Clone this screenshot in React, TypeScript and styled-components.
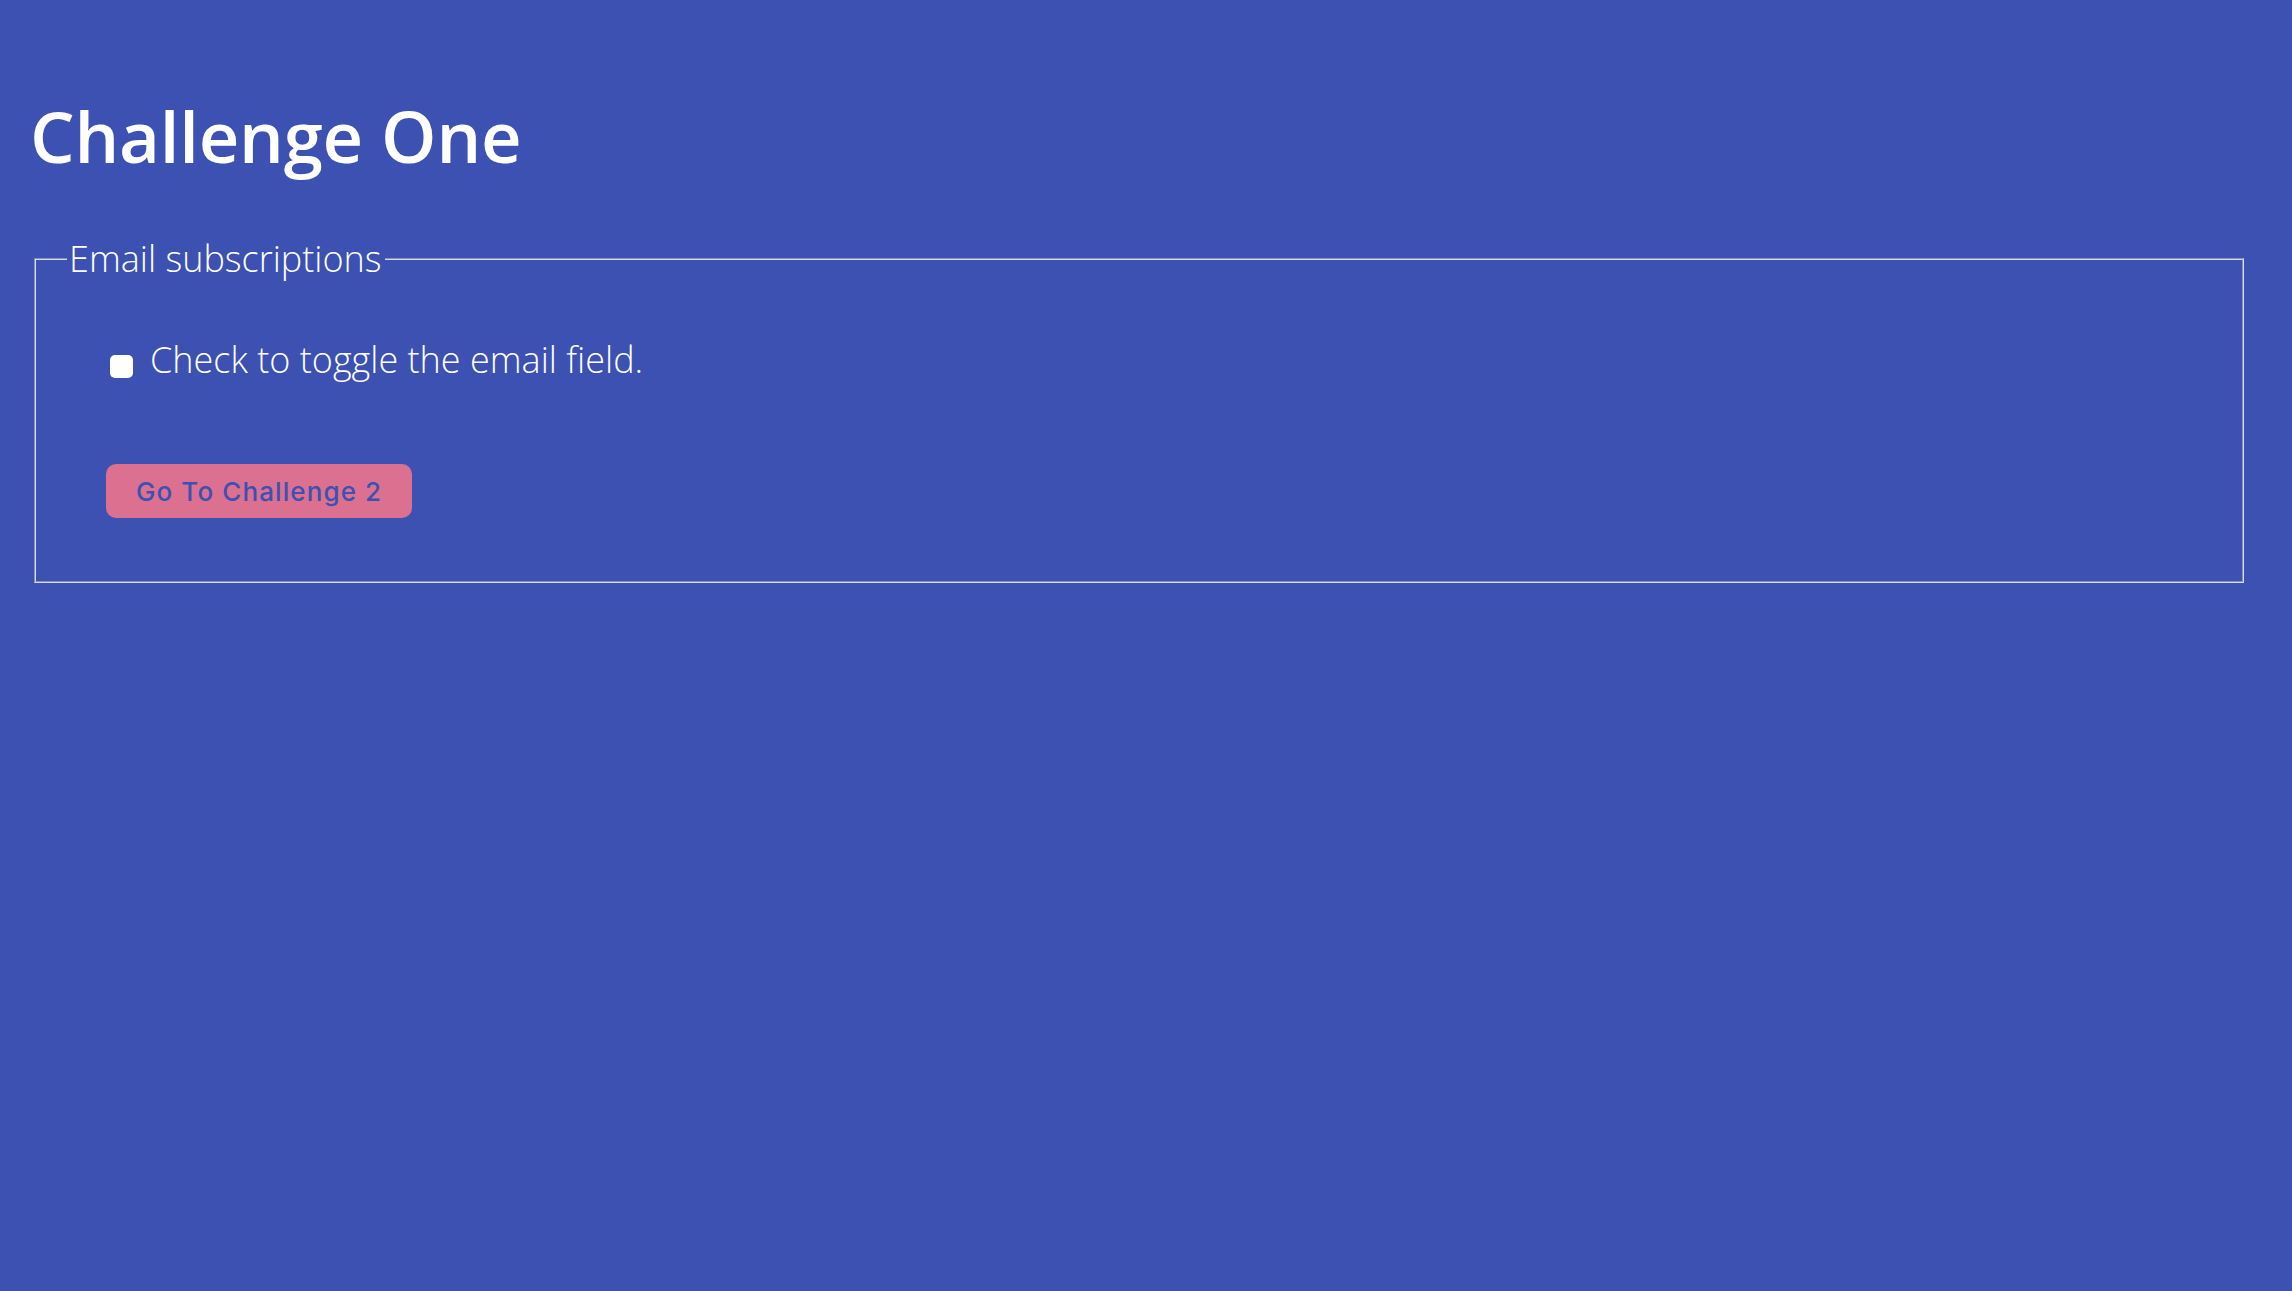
import React, {useState} from 'react';
import styled, {createGlobalStyle} from 'styled-components';

const GlobalStyle = createGlobalStyle`
  html, body {
    margin: 0;
    padding: 0;
    background: #3c51b1;
  }
  body {
    font-family: "Open Sans", "Liberation Sans", sans-serif;
    color: #fff;
  }
`;

const App: React.FC = () => {
  const [checked, setChecked] = useState(false);

  return (
    <Page>
      <GlobalStyle/>
      <Title>Challenge One</Title>
      <Fieldset>
        <Legend>Email subscriptions</Legend>
        <Content>
          <Row>
            <Checkbox
              type="checkbox"
              id="toggle"
              checked={checked}
              onChange={() => setChecked(!checked)}
            />
            <Label htmlFor="toggle">Check to toggle the email field.</Label>
          </Row>
          <Button type="button">Go To Challenge 2</Button>
        </Content>
      </Fieldset>
    </Page>
  );
};

const Page = styled.div`
  min-height: 100vh;
  box-sizing: border-box;
  padding: 88px 44px 0 30px;
  background: #3c51b1;
`;
const Title = styled.h1`
  margin: 0 0 51px;
  font-size: 70.5px;
  font-weight: 600;
  line-height: 96px;
  letter-spacing: -0.2px;
`;
const Fieldset = styled.fieldset`
  margin: 0 4px;
  padding: 0 0 63px 31px;
  border: 2px groove #d2daff;
`;
const Legend = styled.legend`
  padding: 0 3px 0 2px;
  font-size: 36px;
  font-weight: 300;
  line-height: 48px;
`;
const Content = styled.div`
  display: flex;
  flex-direction: column;
  align-items: flex-start;
  padding: 53px 0 0 39px;
  gap: 81px;
`;
const Row = styled.div`
  display: flex;
  align-items: center;
  height: 47px;
`;
const Checkbox = styled.input`
  appearance: none;
  width: 23px;
  height: 23px;
  margin: 14px 17px 0 4px;
  border-radius: 5px;
  background: #fff;
  border: none;
  cursor: pointer;
`;
const Label = styled.label`
  font-size: 36px;
  font-weight: 300;
  line-height: 47px;
`;
const Button = styled.button`
  height: 54px;
  padding: 0 30px;
  border: none;
  border-radius: 10px;
  background: #db7090;
  color: #3c51b1;
  font-family: Inter, "Liberation Sans", sans-serif;
  font-size: 26px;
  font-weight: 500;
  letter-spacing: 1.1px;
  cursor: pointer;
`;

export default App;
